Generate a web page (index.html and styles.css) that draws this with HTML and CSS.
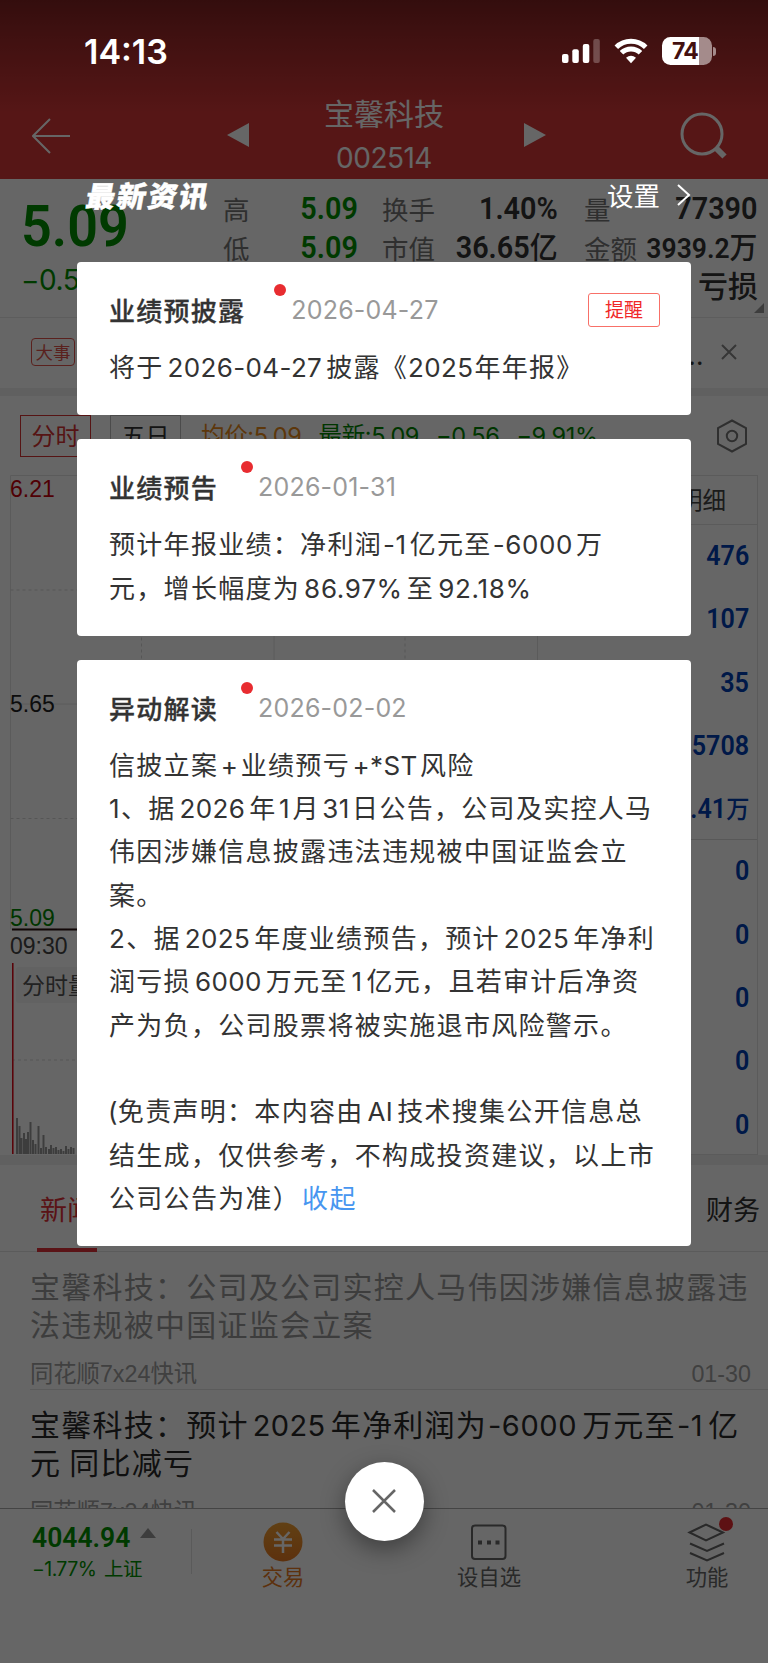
FILE: index.html
```html
<!DOCTYPE html>
<html lang="zh-CN">
<head>
    <meta charset="UTF-8">
    <title>宝馨科技 002514</title>
    <link rel="stylesheet" href="styles.css">
</head>
<body>
    <div class="app">
        <header class="header">
            <svg class="back" width="40" height="38" viewBox="0 0 40 38"><path d="M38 19H1M18 2L1 19l17 17" /></svg>
            <svg class="prev" width="22" height="24" viewBox="0 0 22 24"><path d="M0 12L22 0v24z" /></svg>
            <div class="stock-name">
                <div class="name">宝馨科技</div>
                <div class="code">002514</div>
            </div>
            <svg class="next" width="22" height="24" viewBox="0 0 22 24"><path d="M22 12L0 0v24z" /></svg>
            <svg class="search" width="48" height="48" viewBox="0 0 48 48"><circle cx="22" cy="22" r="20" /><path class="handle" d="M36 36l8.500 8.500" /></svg>
        </header>

        <section class="quote">
            <div class="price">
                <div class="din big">5.09</div>
                <div class="change">−0.56 −9.91%</div>
            </div>
            <div class="pairs high-low">
                <div class="pair green"><label>高</label><b class="din">5.09</b></div>
                <div class="pair green"><label>低</label><b class="din">5.09</b></div>
            </div>
            <div class="pairs turnover">
                <div class="pair"><label>换手</label><b class="din">1.40%</b></div>
                <div class="pair"><label>市值</label><b class="din">36.65<i>亿</i></b></div>
            </div>
            <div class="pairs volume">
                <div class="pair"><label>量</label><b class="din">77390</b></div>
                <div class="pair"><label>金额</label><b class="din small">3939.2<i>万</i></b></div>
                <div class="loss">亏损</div>
            </div>
            <div class="corner"></div>
        </section>

        <section class="notice">
            <span class="tag">大事</span>
            <span class="dots">...</span>
            <svg width="16" height="16" viewBox="0 0 16 16"><path d="M1 1l14 14M15 1L1 15" /></svg>
        </section>

        <section class="chart-tabs">
            <span class="tab active">分时</span>
            <span class="tab">五日</span>
            <div class="legend">
                <span class="avg">均价:5.09</span>
                <span>最新:5.09</span>
                <span>−0.56</span>
                <span>−9.91%</span>
            </div>
            <svg class="gear" width="32" height="34" viewBox="0 0 32 34"><path d="M16 1.500L30 9v16L16 32.500 2 25V9z" /><circle cx="16" cy="17" r="5.200" /></svg>
        </section>

        <section class="chart-row">
            <svg class="chart" width="530" height="682" viewBox="0 0 530 682">
                <g class="grid">
                    <path d="M.5 .5H527.500V454H.5zM.5 229H527M264 .5V454" />
                    <path class="dash" d="M.5 115H527M.5 343.500H527M131.500 .5V454M395 .5V454M2 585H527" />
                </g>
                <path class="zero" d="M2 454.500H527" />
                <text class="up" x="0" y="22">6.21</text>
                <text x="0" y="237">5.65</text>
                <text class="down" x="0" y="451">5.09</text>
                <text class="time" x="0" y="479">09:30</text>
                <rect class="label-bg" x="6" y="492" width="110" height="36" rx="3" />
                <text class="label" x="12" y="519">分时量</text>
                <path class="vol" d="M7 679V643M9.500 679V651M11.500 679V663M14 679V658M16 679V664M18 679V657M20.500 679V647M23 679V665M25.500 679V669M28.500 679V651M31 679V673M33.500 679V660M36 679V672M39 679V674M41 679V670M43.500 679V673M46 679V672M48.500 679V675M51 679V674M53.500 679V676M56 679V671M58.500 679V674M61 679V672M63.500 679V673" />
                <path class="vol-line" d="M2.800 488V679" />
            </svg>
            <div class="trades">
                <div class="trades-head">明细</div>
                <div class="trade"><b class="din">476</b></div>
                <div class="trade"><b class="din">107</b></div>
                <div class="trade"><b class="din">35</b></div>
                <div class="trade"><b class="din">15708</b></div>
                <div class="trade last"><b class="din">16.41<i>万</i></b></div>
                <div class="trade"><b class="din">0</b></div>
                <div class="trade"><b class="din">0</b></div>
                <div class="trade"><b class="din">0</b></div>
                <div class="trade"><b class="din">0</b></div>
                <div class="trade"><b class="din">0</b></div>
            </div>
        </section>

        <nav class="news-tabs">
            <span class="active">新闻</span>
            <span>财务</span>
        </nav>

        <section class="news">
            <article class="read">
                <h3>宝馨科技：公司及公司实控人马伟因涉嫌信息披露违<br>法违规被中国证监会立案</h3>
                <div class="meta"><span>同花顺7x24快讯</span><span>01-30</span></div>
            </article>
            <article>
                <h3>宝馨科技：预计<em>2025</em>年净利润为<em class="left">-6000</em>万元至<em class="left">-1</em>亿<br>元 同比减亏</h3>
                <div class="meta"><span>同花顺7x24快讯</span><span>01-30</span></div>
            </article>
        </section>

        <footer class="bottom-bar">
            <div class="index">
                <div class="index-value"><span class="din">4044.94</span><svg width="16" height="10" viewBox="0 0 16 10"><path d="M8 0l8 10H0z" /></svg></div>
                <div class="index-change">−1.77% <span>上证</span></div>
            </div>
            <div class="action trade-action">
                <svg width="40" height="40" viewBox="0 0 40 40">
                    <defs><linearGradient id="gold" x1="0" y1="0" x2="0" y2="1"><stop offset="0" stop-color="#f2a033" /><stop offset="1" stop-color="#e87a22" /></linearGradient></defs>
                    <circle cx="20" cy="20" r="19.500" fill="url(#gold)" />
                    <path d="M13.500 10l6.500 7 6.500-7M11 17.500h18M11 23.500h18M20 17v14" />
                </svg>
                <span>交易</span>
            </div>
            <div class="action">
                <svg width="40" height="40" viewBox="0 0 40 40"><rect x="3" y="3.500" width="33.500" height="33.500" rx="3" /><path class="fill" d="M9 18.500h4v4H9zM18 18.500h4v4h-4zM26.500 18.500h4v4h-4z" /></svg>
                <span>设自选</span>
            </div>
            <div class="action functions">
                <svg width="40" height="40" viewBox="0 0 40 40"><path d="M2.500 10.500L19 2.500l17 8-17 8zM3 21.500l17 7.500 17-7.500M3 31l17 7.500L37 31" /></svg>
                <span>功能</span>
                <i class="badge"></i>
            </div>
        </footer>
    </div>

    <div class="mask">
        <div class="status-bar">
            <span class="clock">14:13</span>
            <svg class="signal" width="40" height="26" viewBox="0 0 40 26">
                <rect x="1" y="16" width="6.500" height="9" rx="2" /><rect x="11.300" y="11.300" width="6.500" height="13.700" rx="2" /><rect x="21.800" y="6" width="6.500" height="19" rx="2" /><rect class="off" x="32.300" y="1" width="6.500" height="24" rx="2" />
            </svg>
            <svg class="wifi" width="34" height="26" viewBox="0 0 34 26"><path d="M2.300 9.200a21 21 0 0 1 29.400 0M7.500 14.800a13.500 13.500 0 0 1 19 0" /><path class="fill" d="M17 25.200l-5-5.400q5-4 10 0z" /></svg>
            <div class="battery"><span>74</span></div>
            <i class="nub"></i>
        </div>

        <div class="popup-head">
            <h2>最新资讯</h2>
            <span class="settings">设置</span>
            <svg width="14" height="22" viewBox="0 0 14 22"><path d="M1 1l11 10L1 21" /></svg>
        </div>

        <div class="cards">
            <div class="card">
                <div class="card-head">
                    <h4>业绩预披露</h4><i class="dot wide"></i><time>2026-04-27</time>
                    <button class="remind">提醒</button>
                </div>
                <p>将于<em>2026-04-27</em>披露《<em class="start">2025</em>年年报》</p>
            </div>
            <div class="card">
                <div class="card-head"><h4>业绩预告</h4><i class="dot"></i><time>2026-01-31</time></div>
                <p>预计年报业绩：净利润<em class="minus">-1</em>亿元至<em class="minus">-6000</em>万</p>
                <p>元，增长幅度为<em class="percent">86.97%</em>至<em class="percent">92.18%</em></p>
            </div>
            <div class="card">
                <div class="card-head"><h4>异动解读</h4><i class="dot"></i><time>2026-02-02</time></div>
                <p>信披立案<em class="tight">+</em>业绩预亏<em class="tight">+*ST</em>风险</p>
                <p><em class="start">1</em>、据<em>2026</em>年<em class="tight">1</em>月<em class="tight">31</em>日公告，公司及实控人马</p>
                <p>伟因涉嫌信息披露违法违规被中国证监会立</p>
                <p>案。</p>
                <p><em class="start">2</em>、据<em>2025</em>年度业绩预告，预计<em>2025</em>年净利</p>
                <p>润亏损<em>6000</em>万元至<em>1</em>亿元，且若审计后净资</p>
                <p>产为负，公司股票将被实施退市风险警示。</p>
                <p>&nbsp;</p>
                <p><em class="paren">(</em>免责声明：本内容由<em>AI</em>技术搜集公开信息总</p>
                <p>结生成，仅供参考，不构成投资建议，以上市</p>
                <p>公司公告为准）<a class="fold">收起</a></p>
            </div>
        </div>

        <div class="close"><svg width="24" height="24" viewBox="0 0 24 24"><path d="M1 1l22 22M23 1L1 23" /></svg></div>
    </div>
</body>
</html>
```
FILE: styles.css
```css
* {
    box-sizing: border-box;
}
body {
    margin: 0;
    width: 768px;
    height: 1663px;
    position: relative;
    overflow: hidden;
    background: #fff;
    color: #333;
    font-family: "Noto Sans CJK SC", sans-serif;
    text-autospace: no-autospace;
}
h2, h3, h4, p {
    margin: 0;
    font-weight: 400;
}
i, em {
    font-style: normal;
}
svg {
    fill: none;
    display: block;
    flex-shrink: 0;
}
.app {
    height: 1663px;
    display: flex;
    flex-direction: column;
}
.din {
    font-family: Roboto, "Noto Sans CJK SC", sans-serif;
    font-weight: 600;
    display: inline-block;
    transform: scaleX(.93);
    transform-origin: right center;
    white-space: nowrap;
}

/* Header */
.header {
    height: 179px;
    flex-shrink: 0;
    padding: 92px 40px 0 32px;
    display: flex;
    background: linear-gradient(#822222, #9f2a2a 35px, #d63838 112px);
    color: #fff;
}
.header svg {
    stroke: #fff;
    stroke-width: 2;
}
.back { margin-top: 25px; }
.header .prev, .header .next {
    fill: #fff;
    stroke: none;
    margin-top: 31px;
}
.prev { margin-left: 155px; }
.stock-name {
    width: 275px;
    padding-right: 5px;
    text-align: center;
}
.name {
    font-size: 30px;
    line-height: 41px;
}
.code {
    font-family: Inter, sans-serif;
    font-size: 28px;
    line-height: 50px;
    letter-spacing: -.5px;
}
.header .search {
    margin: 20px 0 0 auto;
    stroke-width: 3;
}
.search .handle { stroke-width: 6; }

/* Quote */
.quote {
    height: 139px;
    flex-shrink: 0;
    position: relative;
    display: flex;
    padding-left: 21px;
    border-bottom: 1px solid #e8e8e8;
}
.green .din, .price { color: #009200; }
.price { width: 202px; }
.big {
    font-size: 58px;
    line-height: 60px;
    margin-top: 17px;
    transform-origin: left center;
}
.change {
    font: 28px/40px Inter, sans-serif;
    letter-spacing: -.5px;
    margin-top: 4px;
    white-space: nowrap;
}
.pairs { padding-top: 10px; }
.high-low { width: 135px; }
.turnover {
    width: 176px;
    margin-left: 24px;
}
.volume {
    width: 174px;
    margin-left: 26px;
}
.pair {
    display: flex;
    justify-content: space-between;
    align-items: center;
    height: 39px;
    font-size: 26.500px;
    white-space: nowrap;
}
.pair label { color: #777; }
.pair .din {
    font-size: 31px;
    line-height: 39px;
}
.pair .din.small {
    font-size: 28.500px;
    margin-left: -14px;
}
.pair i {
    font-size: 30px;
    font-weight: 500;
}
.loss {
    font-size: 30px;
    font-weight: 500;
    line-height: 34px;
    text-align: right;
}
.corner {
    position: absolute;
    right: 4px;
    bottom: 4px;
    border: 5px solid;
    border-color: transparent #999 #999 transparent;
}

/* Notice */
.notice {
    height: 78px;
    flex-shrink: 0;
    padding: 0 31px 8px 31px;
    display: flex;
    align-items: center;
    border-bottom: 8px solid #f0f0f0;
}
.tag {
    width: 44px;
    height: 28px;
    margin-top: 6px;
    border: 1px solid #e0544c;
    border-radius: 4px;
    color: #e0544c;
    font-size: 17.500px;
    line-height: 26px;
    text-align: center;
}
.dots {
    margin-left: auto;
    margin-right: 17px;
    padding-top: 13px;
    font: 26px/40px Inter, sans-serif;
    letter-spacing: .4px;
}
.notice svg {
    margin-top: 6px;
    stroke: #888;
    stroke-width: 2;
}

/* Chart tabs */
.chart-tabs {
    height: 79px;
    flex-shrink: 0;
    padding: 0 20px;
    display: flex;
    align-items: center;
}
.tab {
    width: 71px;
    height: 42px;
    border: 1px solid #bbb;
    font-size: 24px;
    line-height: 38px;
    text-align: center;
    margin-right: 19px;
}
.tab.active {
    color: #d83434;
    border-color: #d83434;
}
.legend {
    display: flex;
    gap: 17px;
    color: #008800;
    font: 23.500px/40px Inter, "Noto Sans CJK SC", sans-serif;
    letter-spacing: -.35px;
    margin-left: 1px;
}
.legend .avg { color: #e88a1a; }
.gear {
    margin-left: auto;
    stroke: #777;
    stroke-width: 2;
}

/* Chart */
.chart-row {
    height: 690px;
    flex-shrink: 0;
    padding-left: 10px;
    display: flex;
    border-bottom: 10px solid #f0f0f0;
}
.chart text {
    font: 23px "Liberation Sans", "Noto Sans CJK SC", sans-serif;
    fill: #222;
}
.chart .up { fill: #c8000a; }
.chart .down { fill: #008800; }
.chart .time { fill: #444; }
.chart .label { fill: #555; }
.grid { stroke: #e4e4e4; }
.dash { stroke-dasharray: 3 3; stroke: #d8d8d8; }
.zero { stroke: #2a1010; stroke-width: 2; }
.label-bg { fill: #f4f4f4; }
.vol { stroke: #999; stroke-width: 2; }
.vol-line { stroke: #e00010; stroke-width: 1.500; }
.trades {
    width: 213px;
    height: 680px;
    margin-left: 5px;
    border: 1px solid #e4e4e4;
    border-left: 0;
    color: #0040b4;
    font-size: 27px;
    text-align: right;
}
.trades-head {
    height: 49px;
    padding-right: 31px;
    border-bottom: 1px solid #e4e4e4;
    color: #444;
    font-size: 23.500px;
    line-height: 47px;
}
.trade {
    height: 63.300px;
    line-height: 58px;
    padding-right: 8px;
}
.trade.last {
    height: 62.300px;
    border-bottom: 1px solid #ddd;
}
.trade i {
    font-size: 25px;
    font-weight: 500;
    line-height: 1;
}

/* News */
.news-tabs {
    height: 87px;
    flex-shrink: 0;
    padding: 0 8px 0 37px;
    display: flex;
    justify-content: space-between;
    font-size: 27px;
    line-height: 87px;
    border-bottom: 1px solid #e4e4e4;
}
.news-tabs .active {
    width: 60px;
    height: 87px;
    color: #e03038;
    padding-left: 3px;
    border-bottom: 4px solid #e03038;
    white-space: nowrap;
}
.news {
    flex: 1;
    min-height: 0;
    overflow: hidden;
    padding-left: 30px;
    color: #2a2a2a;
}
.news article {
    height: 138px;
    padding-top: 15px;
    border-bottom: 1px solid #e4e4e4;
}
.news .read { color: #999; }
.news h3 {
    font-size: 30px;
    letter-spacing: 1.250px;
    line-height: 37.500px;
    white-space: nowrap;
}
.news em {
    font-family: Inter, sans-serif;
    font-size: 29px;
    line-height: 0;
    letter-spacing: .4px;
    margin: 0 5px 0 4px;
}
.news em.left {
    margin-left: 1px;
    letter-spacing: .6px;
}
.meta {
    display: flex;
    justify-content: space-between;
    margin-top: 17px;
    padding-right: 17px;
    color: #a0a0a0;
    font: 23.300px/30px "Liberation Sans", "Noto Sans CJK SC", sans-serif;
}

/* Bottom bar */
.bottom-bar {
    height: 155px;
    flex-shrink: 0;
    border-top: 1px solid #aaa;
    background: #fff;
    display: flex;
    color: #666;
}
.index {
    width: 192px;
    height: 65px;
    padding-left: 32px;
    color: #009200;
    background: linear-gradient(#e0e0e0, #e0e0e0) right bottom / 1px 45px no-repeat;
}
.index-value {
    display: flex;
    height: 36px;
    margin-top: 11px;
}
.index-value .din {
    font-size: 28.500px;
    line-height: 36px;
    width: 108px;
    transform-origin: left center;
}
.index-value svg {
    margin-top: 8px;
    fill: #999;
}
.index-change {
    font: 19.500px/26px Inter, "Noto Sans CJK SC", sans-serif;
    letter-spacing: -.6px;
}
.index-change span { margin-left: 3px; }
.action {
    width: 64px;
    margin-left: 142px;
    padding-top: 13px;
    position: relative;
    left: -1px;
    display: flex;
    flex-direction: column;
    align-items: center;
    font-size: 21.300px;
    white-space: nowrap;
}
.action svg {
    stroke: #666;
    stroke-width: 2;
}
.action .fill { fill: #666; stroke: none; }
.action span { line-height: 27px; }
.trade-action {
    margin-left: 60px;
    color: #e87a22;
}
.trade-action svg {
    stroke: none;
}
.trade-action path {
    stroke: #fff;
    stroke-width: 2.500;
}
.functions { margin-left: 154px; }
.badge {
    position: absolute;
    left: 44px;
    top: 8px;
    width: 14px;
    height: 14px;
    border-radius: 50%;
    background: #e82c30;
}

/* Popup layer */
.mask {
    position: absolute;
    inset: 0;
    background: rgba(0, 0, 0, .6);
    color: #fff;
}
.status-bar {
    height: 179px;
    padding: 37px 52px 0 84px;
    display: flex;
    fill: #fff;
}
.status-bar svg {
    fill: #fff;
    margin-top: 1px;
}
.clock {
    font: 600 34px/30px Inter, sans-serif;
}
.signal { margin-left: auto; }
.off { opacity: .25; }
.status-bar .wifi {
    margin-left: 13px;
    fill: none;
    stroke: #fff;
    stroke-width: 5;
}
.status-bar .wifi .fill { fill: #fff; stroke: none; }
.battery {
    width: 50px;
    height: 28px;
    margin-left: 14px;
    border-radius: 8.500px;
    background: linear-gradient(90deg, #fff 37px, #a48b8b 37px);
    color: #43100f;
    font: 700 23px/28px Inter, sans-serif;
    letter-spacing: -.8px;
    padding-left: 10px;
}
.nub {
    width: 3px;
    height: 9px;
    margin: 10px 0 0 1px;
    border-radius: 0 3px 3px 0;
    background: #a48b8b;
}
.popup-head {
    height: 83px;
    padding: 0 77px 0 82px;
    display: flex;
}
.popup-head h2 {
    font-size: 29px;
    font-weight: 900;
    letter-spacing: 2px;
    line-height: 30px;
    transform: skewX(-10deg);
    -webkit-text-stroke: .5px;
}
.settings {
    margin-left: auto;
    margin-right: 17px;
    font-size: 26.500px;
    line-height: 31px;
}
.popup-head svg {
    margin-top: 5px;
    stroke: #fff;
    stroke-width: 2;
}
.cards {
    padding: 0 77px;
    display: flex;
    flex-direction: column;
    gap: 24px;
}
.card {
    padding: 27px 31px 26px 32px;
    border-radius: 4px;
    background: #fff;
    color: #333;
}
.card-head {
    height: 55px;
    display: flex;
}
.card h4 {
    font-size: 26px;
    font-weight: 500;
    line-height: 41px;
    letter-spacing: 1.250px;
    -webkit-text-stroke: .3px;
}
.dot {
    width: 12px;
    height: 12px;
    margin: -5px 5px 0 23px;
    border-radius: 50%;
    background: #e82c30;
}
.card-head .wide { margin-left: 29px; }
.card time {
    font: 25px/43px Inter, sans-serif;
    letter-spacing: .2px;
    color: #999;
}
.remind {
    width: 72px;
    height: 34px;
    margin: 4px 0 0 auto;
    padding: 0 0 2px;
    background: none;
    border: 1.500px solid #f87068;
    border-radius: 3px;
    color: #f02828;
    font: 19px/30px "Noto Sans CJK SC", sans-serif;
}
.card p {
    font-size: 26px;
    letter-spacing: 1.300px;
    line-height: 43.300px;
    height: 43.300px;
    white-space: nowrap;
}
.card p:last-child { margin-bottom: 2px; }
.card em {
    font-family: Inter, sans-serif;
    line-height: 0;
    margin: 0 4px;
    letter-spacing: .35px;
}
.card em.start { margin: 0 1px 0 0; }
.card em.tight { margin: 0 2.500px; }
.card em.paren { margin: 0 0 0 -1px; }
.card em.percent { letter-spacing: .7px; }
.card em.minus {
    margin: 0 3px 0 1px;
    letter-spacing: .6px;
}
.fold {
    color: #4796f0;
    margin-left: 2px;
}
.close {
    position: absolute;
    left: 344.500px;
    top: 1461.500px;
    width: 79px;
    height: 79px;
    border-radius: 50%;
    background: #fff;
    box-shadow: 0 8px 24px rgba(0, 0, 0, .4);
    display: flex;
    align-items: center;
    justify-content: center;
}
.close svg {
    stroke: #666;
    stroke-width: 2.500;
}
```
